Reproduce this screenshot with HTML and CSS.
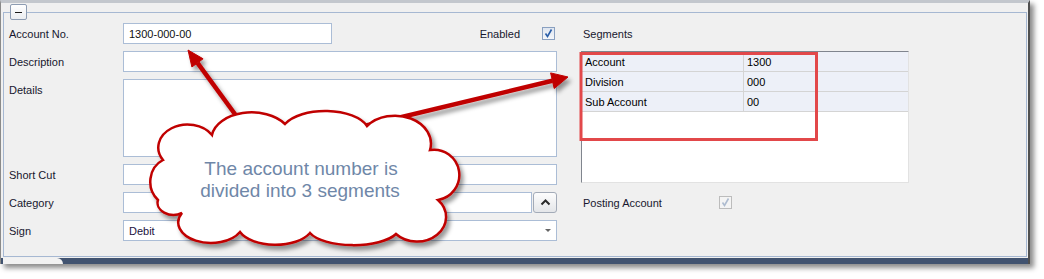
FILE: index.html
```html
<!DOCTYPE html>
<html lang="en">
<head>
    <meta charset="UTF-8">
    <title>Account</title>
    <link rel="stylesheet" href="styles.css">
</head>
<body>
    <div class="window">
        <fieldset class="group">
            <legend class="toggle"><span class="minus"></span></legend>
            <div class="form">
                <div class="lbl">Account No.</div>
                <div class="cell">
                    <div class="input acct">1300-000-00</div>
                    <span class="lbl enabled">Enabled</span>
                    <span class="check">
                        <svg width="11" height="11" viewBox="0 0 11 11"><path d="M2.5 5.5 L4.5 8.5 L8.5 1.5" fill="none" stroke="#2a5ea8" stroke-width="1.6"/></svg>
                    </span>
                </div>
                <div></div>
                <div class="lbl seg-title">Segments</div>

                <div class="lbl">Description</div>
                <div class="input"></div>
                <div></div>
                <div class="segments">
                    <div class="seg-row"><span>Account</span><span>1300</span></div>
                    <div class="seg-row"><span>Division</span><span>000</span></div>
                    <div class="seg-row"><span>Sub Account</span><span>00</span></div>
                </div>

                <div class="lbl lbl-top">Details</div>
                <div class="input"></div>
                <div></div>

                <div class="lbl">Short Cut</div>
                <div class="input"></div>
                <div></div>

                <div class="lbl">Category</div>
                <div class="cell">
                    <div class="input grow"></div>
                    <button class="spin">
                        <svg width="11" height="7" viewBox="0 0 11 7"><path d="M1.5 5.5 L5.5 1.5 L9.5 5.5" fill="none" stroke="#2b2b2b" stroke-width="2"/></svg>
                    </button>
                </div>
                <div></div>
                <div class="posting">
                    <span>Posting Account</span>
                    <span class="check disabled">
                        <svg width="11" height="11" viewBox="0 0 11 11"><path d="M2.5 5.5 L4.5 8.5 L8.5 1.5" fill="none" stroke="#aebcd0" stroke-width="1.6"/></svg>
                    </span>
                </div>

                <div class="lbl">Sign</div>
                <div class="input combo">
                    <div class="combo-text">Debit</div>
                    <span class="arrow"></span>
                </div>
                <div></div>
                <div></div>
            </div>
        </fieldset>
        <div class="statusbar"><div class="tab"></div></div>
    </div>

    <!-- annotation drawn over the screenshot -->
    <svg class="callout" width="1044" height="279" viewBox="0 0 1044 279">
        <defs>
            <filter id="sh" x="-20%" y="-20%" width="140%" height="140%">
                <feDropShadow dx="3" dy="4" stdDeviation="2" flood-color="#000" flood-opacity="0.4"/>
            </filter>
        </defs>
        <rect x="581" y="53.5" width="235.5" height="86" fill="none" stroke="#e2484a" stroke-width="3"/>
        <g filter="url(#sh)" fill="#c00000" stroke="#c00000">
            <line x1="240" y1="121" x2="197.5" y2="62.9" stroke-width="4.5"/>
            <polygon points="188,50 203.1,58.8 191.9,67" stroke-width="1"/>
            <line x1="360" y1="127" x2="552.4" y2="80.7" stroke-width="4.5"/>
            <polygon points="568,77 554.2,88.5 550.6,72.9" stroke-width="1"/>
        </g>
        <path filter="url(#sh)" fill="#fff" stroke="#c00000" stroke-width="2.5"
              d="M212 135 A40 26 0 0 1 285 124 A44 22 0 0 1 367 126 A36 28 0 0 1 430 150 A25 25 0 0 1 438 200 A26 22 0 0 1 396 234 A46 18 0 0 1 310 233 A38 20 0 0 1 240 232 A32 20 0 0 1 182 213 A16 12 0 0 1 158 200 A22 24 0 0 1 163 160 A28 22 0 0 1 212 135 Z"/>
        <text class="cloud-text" x="301" y="175" text-anchor="middle">The account number is</text>
        <text class="cloud-text" x="300" y="197" text-anchor="middle">divided into 3 segments</text>
    </svg>
</body>
</html>
```

FILE: styles.css
```css
* {
    margin: 0;
    padding: 0;
    box-sizing: border-box;
}

body {
    font-family: 'Liberation Sans', Arial, sans-serif;
    font-size: 11px;
    color: #17172e;
    background: #fff;
    width: 1044px;
    height: 279px;
    overflow: hidden;
}

.window {
    width: 1030px;
    height: 264px;
    background: #f0f0f0;
    border-top: 3px solid #c3c7cd;
    border-left: 1px solid #8a8a8a;
    border-right: 2px solid #505050;
    padding-top: 1px;
    box-shadow: 4px 4px 5px rgba(0, 0, 0, 0.45);
}

.group {
    width: 1024px;
    height: 253px;
    margin-left: 2px;
    padding: 0 0 0 5px;
    border: 1px solid #a6b8d2;
    min-inline-size: 0;
}

.toggle {
    width: 17px;
    height: 16px;
    margin-left: 1px;
    padding: 0;
    border: 1px solid #8d9cb2;
    border-radius: 2px;
    background: linear-gradient(#ffffff, #ebedf0);
    display: flex;
    align-items: center;
    justify-content: center;
}

.minus {
    width: 7px;
    height: 1px;
    background: #1a1a1a;
}

.form {
    display: grid;
    grid-template-columns: 114px 434px 24px 328px;
    grid-template-rows: 21px 21px 78px 21px 21px 21px;
    row-gap: 7px;
    margin-top: 3px;
}

.lbl {
    display: flex;
    align-items: center;
}

.lbl-top {
    align-items: flex-start;
    padding-top: 5px;
}

.cell {
    display: flex;
    align-items: center;
}

.input {
    background: #fff;
    border: 1px solid #abbdd6;
    display: flex;
    align-items: center;
    padding-left: 5px;
    color: #111;
}

.acct {
    width: 209px;
    height: 100%;
}

.grow {
    flex: 1;
    height: 100%;
}

.enabled {
    margin-left: auto;
}

.check {
    width: 13px;
    height: 13px;
    margin-left: 22px;
    margin-right: 2px;
    border: 1px solid #8aa0c0;
    background: linear-gradient(#dfe6f0, #f4f6fa);
    display: flex;
    align-items: center;
    justify-content: center;
}

.check.disabled {
    margin-left: 57px;
    border-color: #bcbcbc;
    background: #f4f4f4;
}

.spin {
    width: 24px;
    height: 21px;
    margin-left: 1px;
    border: 1px solid #a3abb8;
    border-radius: 3px;
    background: linear-gradient(#fdfdfd, #e4e6e9);
    display: flex;
    align-items: center;
    justify-content: center;
}

.seg-title {
    padding-left: 2px;
}

.segments {
    grid-column: 4;
    grid-row: 2 / 5;
    background: #fff;
    border-top: 1px solid #80858e;
    border-left: 1px solid #80858e;
    border-right: 1px solid #e2e2e2;
    border-bottom: 1px solid #e2e2e2;
    margin-bottom: 2px;
}

.seg-row {
    display: grid;
    grid-template-columns: 162px 1fr;
    height: 20px;
    background: #edf0f8;
    border-bottom: 1px solid #d4d4d4;
    color: #000;
}

.seg-row span {
    display: flex;
    align-items: center;
    padding-left: 3px;
}

.seg-row span:first-child {
    border-right: 1px solid #d4d4d4;
}

.posting {
    grid-column: 4;
    display: flex;
    align-items: center;
    padding-left: 2px;
}

.combo {
    padding-left: 0;
}

.combo-text {
    width: 93px;
    height: 100%;
    border-right: 1px solid #abbdd6;
    display: flex;
    align-items: center;
    padding-left: 5px;
    color: #1c1240;
}

.arrow {
    margin-left: auto;
    margin-right: 5px;
    width: 0;
    height: 0;
    border-left: 3px solid transparent;
    border-right: 3px solid transparent;
    border-top: 3px solid #666;
}

.statusbar {
    height: 6px;
    margin-top: 1px;
    background: #415370;
    padding-left: 2px;
}

.tab {
    width: 60px;
    height: 6px;
    background: #f2f2f2;
    border-radius: 0 6px 0 0;
}

.callout {
    position: absolute;
    left: 0;
    top: 0;
    pointer-events: none;
}

.cloud-text {
    font-family: 'Liberation Sans', Arial, sans-serif;
    font-size: 19px;
    fill: #6f87a8;
}
```
